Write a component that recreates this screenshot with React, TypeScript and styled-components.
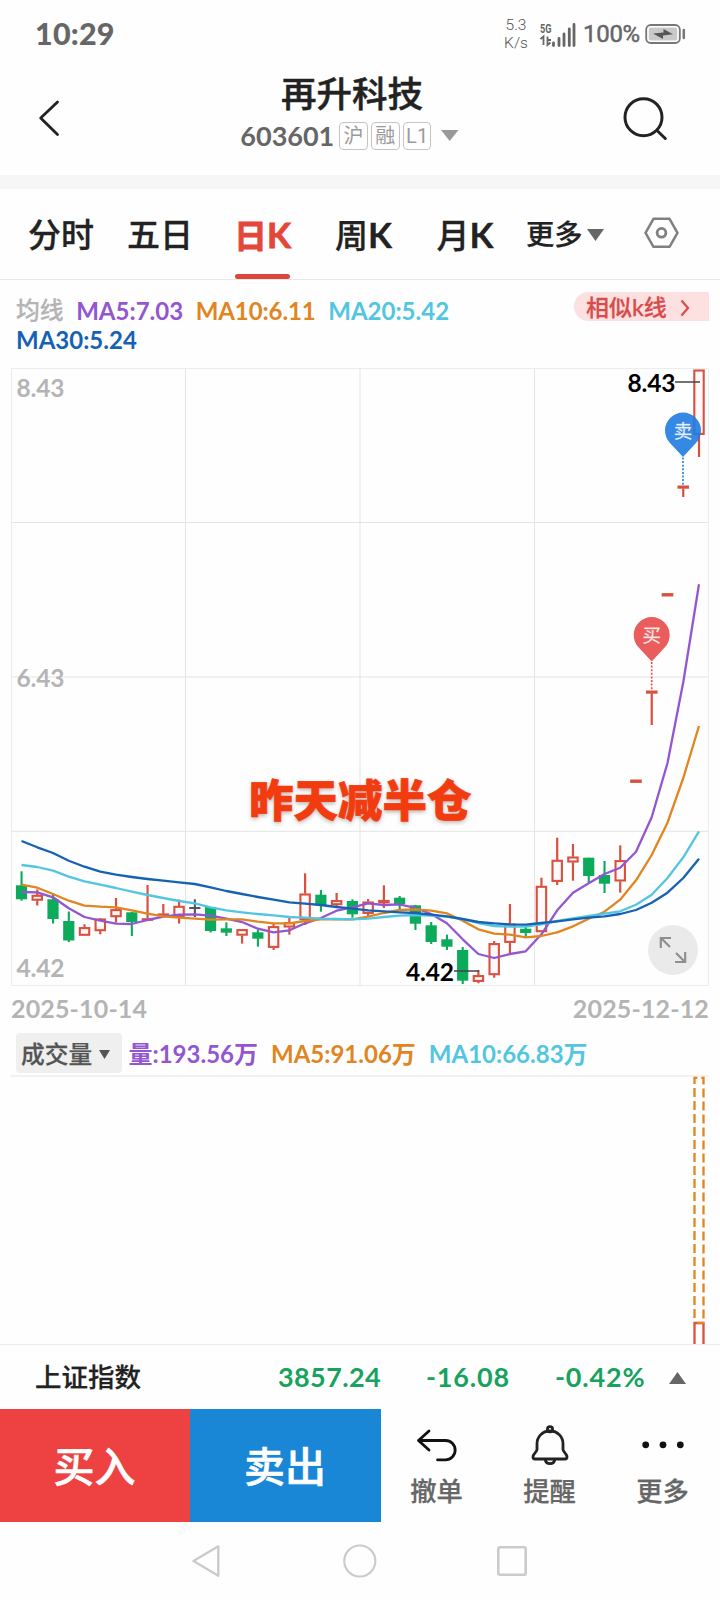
import React from "react";
import styled, { createGlobalStyle } from "styled-components";

const C = {
  ink: "#222222",
  mid: "#666666",
  faint: "#b4b4b4",
  red: "#e5463a",
  candleRed: "#d9503f",
  green: "#0bab5b",
  purple: "#9356d0",
  orange: "#e0851f",
  cyan: "#52c6e0",
  blue: "#1562b4",
  grid: "#e4e4e4",
};

const GlobalStyle = createGlobalStyle`
  * { box-sizing: border-box; }
  html, body { margin: 0; padding: 0; background: #fefefe; }
  body { font-family: "Lato", "Noto Sans CJK SC", sans-serif; color: ${C.ink}; }
  svg { display: block; flex: none; }
`;

const Screen = styled.div`
  width: 720px;
  height: 1600px;
  display: flex;
  flex-direction: column;
  overflow: hidden;
  background: #fefefe;
`;

const Text = styled.span<{ $size: number; $color?: string; $weight?: number; $ls?: number }>`
  font-size: ${(p) => p.$size}px;
  line-height: 1.2;
  font-weight: ${(p) => p.$weight ?? 700};
  color: ${(p) => p.$color ?? C.ink};
  letter-spacing: ${(p) => p.$ls ?? 0}px;
  white-space: nowrap;
  -webkit-text-stroke: ${(p) => (p.$weight === 500 ? 0.25 : 0)}px currentColor;
`;

/* Status bar */
const StatusBar = styled.div`
  height: 68px;
  display: flex;
  align-items: center;
  padding: 0 34px 0 35px;
`;
const Clock = styled(Text)`
  padding-bottom: 1px;
`;
const StatusIcons = styled.div`
  margin-left: auto;
  display: flex;
  align-items: center;
`;
const NetSpeed = styled.div`
  width: 32px;
  margin-right: 8px;
  text-align: center;
  font: 300 15.5px/18px Roboto, sans-serif;
  color: #555;
`;
const BatteryText = styled.span`
  width: 69px;
  padding-left: 7px;
  font: 400 24px/1.2 Roboto, sans-serif;
  letter-spacing: -0.3px;
  color: ${C.mid};
  -webkit-text-stroke: 0.5px ${C.mid};
`;

/* Title bar */
const Header = styled.div`
  height: 107px;
  display: grid;
  grid-template-columns: 102px 1fr 118px;
`;
const HeaderSide = styled.div<{ $end?: boolean }>`
  display: flex;
  justify-content: ${(p) => (p.$end ? "flex-end" : "flex-start")};
  padding: ${(p) => (p.$end ? "27px 52.5px 0 0" : "31px 0 0 37px")};
`;
const HeaderTitle = styled.div`
  display: flex;
  flex-direction: column;
  align-items: center;
`;
const Name = styled.h1`
  margin: 5px 0 0;
  font-size: 35.5px;
  line-height: 42px;
  font-weight: 500;
  -webkit-text-stroke: 0.5px ${C.ink};
`;
const CodeLine = styled.div`
  height: 34px;
  display: flex;
  align-items: center;
  margin-top: 4px;
  margin-left: -5px;
`;
const Code = styled(Text)`
  margin-right: 5px;
`;
const Tag = styled.span`
  width: 28.5px;
  height: 28.5px;
  margin-right: 3.3px;
  border: 1.5px solid #c4c4c4;
  border-radius: 4px;
  color: #9b9b9b;
  font: 400 20px/27px Roboto, "Noto Sans CJK SC", sans-serif;
  text-align: center;
`;
const Band = styled.div`
  height: 14px;
  background: #f6f6f6;
`;

/* Period tabs */
const Tabs = styled.div`
  height: 91px;
  display: flex;
  padding-left: 11px;
  border-bottom: 1px solid #e8e8e8;
`;
const Tab = styled.div<{ $w: number; $active?: boolean }>`
  width: ${(p) => p.$w}px;
  display: flex;
  flex-direction: column;
  align-items: center;
  justify-content: space-between;
  padding-top: 24px;
  font-size: 33px;
  line-height: 42px;
  font-weight: ${(p) => (p.$active ? 700 : 500)};
  color: ${(p) => (p.$active ? C.red : C.ink)};
  -webkit-text-stroke: ${(p) => (p.$active ? 0.8 : 0.3)}px currentColor;
`;
const TabK = styled.span`
  font-size: 35px;
  font-weight: 700;
`;
const Underline = styled.i`
  width: 55px;
  height: 5px;
  border-radius: 3px;
  background: #dc4639;
`;
const MoreTab = styled.div`
  width: 122px;
  height: 91px;
  display: flex;
  align-items: center;
  gap: 4px;
  padding-left: 7px;
`;

/* Moving-average legend */
const Legend = styled.div`
  height: 88px;
  display: flex;
  justify-content: space-between;
  align-items: flex-start;
  padding: 12px 11px 0 16px;
`;
const LegendLines = styled.div`
  display: flex;
  flex-wrap: wrap;
  column-gap: 12.6px;
  width: 460px;
  padding-top: 4px;
  & > span { line-height: 29px; }
`;
const Similar = styled.div`
  width: 135px;
  height: 29px;
  display: flex;
  align-items: center;
  gap: 13px;
  padding: 2px 0 0 12px;
  border-radius: 15px 0 0 15px;
  background: #fde0e0;
`;

/* Price chart */
const ChartArea = styled.div`
  position: relative;
  height: 620px;
`;
const Caption = styled.div`
  position: absolute;
  left: 249px;
  top: 402px;
  font-size: 44.5px;
  line-height: 60px;
  font-weight: 900;
  color: #f23c10;
  white-space: nowrap;
  -webkit-text-stroke: 0.7px #f23c10;
  text-shadow: 0 2px 4px rgba(90, 60, 50, 0.4);
`;
const Expand = styled.div`
  position: absolute;
  left: 648px;
  top: 557px;
  width: 50px;
  height: 50px;
  border-radius: 50%;
  background: rgba(230, 230, 230, 0.85);
  display: grid;
  place-items: center;
`;
const Dates = styled.div`
  height: 43px;
  display: flex;
  justify-content: space-between;
  padding: 5px 11px 0 11px;
`;

/* Volume */
const VolumeHead = styled.div`
  height: 44px;
  display: flex;
  align-items: flex-start;
  padding: 2px 0 0 15.5px;
`;
const VolumePick = styled.div`
  width: 106px;
  height: 40px;
  display: flex;
  align-items: center;
  gap: 7px;
  padding: 2px 0 0 5.5px;
  border-radius: 4px;
  background: #efefef;
`;
const VolumeValues = styled.div`
  height: 40px;
  display: flex;
  align-items: center;
  gap: 13px;
  margin-left: 7px;
  padding-top: 2px;
`;

/* Index line */
const IndexRow = styled.div`
  height: 65px;
  display: grid;
  grid-template-columns: 243px 148px 129px 114px 1fr;
  align-items: center;
  padding: 1px 0 0 35px;
  border-top: 1px solid #ececec;
`;

/* Trading bar */
const Actions = styled.div`
  height: 112.5px;
  display: flex;
`;
const Trade = styled.div<{ $bg: string; $w: number }>`
  width: ${(p) => p.$w}px;
  padding: 0 1px 3px 0;
  background: ${(p) => p.$bg};
  color: #fff;
  display: grid;
  place-items: center;
  font-size: 41px;
  font-weight: 500;
  -webkit-text-stroke: 0.6px #fff;
`;
const Tools = styled.div`
  flex: 1;
  display: grid;
  grid-template-columns: repeat(3, 113px);
  margin-left: -1px;
`;
const Tool = styled.div`
  display: flex;
  flex-direction: column;
  align-items: center;
  padding-top: 12px;
  gap: 7px;
`;

const NavBar = styled.div`
  flex: 1;
  display: flex;
  align-items: center;
  justify-content: space-between;
  padding: 0 192px 0 191px;
`;

function Caret({ w, h, color, up }: { w: number; h: number; color: string; up?: boolean }) {
  return (
    <svg width={w} height={h} viewBox="0 0 10 10" preserveAspectRatio="none">
      <path d={up ? "M0 10H10L5 0Z" : "M0 0H10L5 10Z"} fill={color} />
    </svg>
  );
}

const X0 = 21.5;
const STEP = 15.756;
const TOP = 368;
const px = (i: number) => X0 + STEP * i;

type Kind = "g" | "r" | "d";
// kind, wick top, body top, body bottom, wick bottom
const candles: [Kind, number, number, number, number][] = [
  ["g", 871.3, 885.3, 899.3, 900.7],
  ["r", 889.5, 895, 900.5, 905.5],
  ["g", 894, 899.3, 919, 923.5],
  ["g", 911.5, 921, 940.5, 942],
  ["r", 924.3, 927.3, 935.6, 935.6],
  ["r", 918, 918.7, 931, 934.3],
  ["r", 898, 909.3, 917, 922.6],
  ["g", 912, 912.3, 922, 936],
  ["r", 885, 918.5, 920.5, 920.5],
  ["r", 904, 913.7, 915.7, 916.5],
  ["r", 899.5, 906, 916.7, 923.6],
  ["d", 899.3, 907, 909, 917],
  ["g", 907, 907, 931, 932.5],
  ["g", 922.3, 928.3, 932.7, 936],
  ["r", 929, 929.3, 935.5, 943.6],
  ["g", 929.5, 932.3, 938.7, 946.6],
  ["r", 923.3, 926.3, 947.7, 950],
  ["r", 918, 922.3, 927.3, 934.7],
  ["r", 873.3, 893.7, 920, 925],
  ["g", 890, 894.7, 905.3, 911.7],
  ["r", 893, 900.3, 905, 906.7],
  ["g", 899.3, 901, 914.3, 917.7],
  ["r", 899, 901.7, 913.7, 916.7],
  ["r", 885.3, 900.2, 903, 908],
  ["g", 896, 897.7, 904, 910.7],
  ["g", 905, 905.3, 923.7, 930],
  ["g", 922, 925.3, 942, 944],
  ["g", 934.7, 939.3, 946.7, 950],
  ["g", 947, 950, 980.7, 984],
  ["r", 970, 975.3, 981.7, 983.3],
  ["r", 941, 943.3, 975, 977.7],
  ["r", 904, 923.7, 942.7, 954],
  ["g", 926.7, 928.7, 933, 936.7],
  ["r", 877.7, 886, 932, 932],
  ["r", 837.7, 860, 881.7, 885],
  ["r", 844, 856.7, 862.3, 880.7],
  ["g", 857.7, 857.7, 876, 882.7],
  ["g", 861, 875, 883.7, 893],
  ["r", 845.3, 860.3, 881.3, 892.7],
  ["r", 779.8, 779.8, 782.6, 782.6],
  ["r", 690.8, 690.8, 693.4, 725],
  ["r", 593.4, 593.4, 596.2, 596.2],
  ["r", 485.8, 485.8, 488.4, 497],
  ["r", 369.7, 369.7, 434.7, 457],
];

const ma30 = [841, 847.3, 853, 860.7, 866.7, 871.7, 874.7, 877, 879, 880.7, 882.3, 884, 887.3, 891, 894, 897, 899.7, 902.3, 903.7, 905, 907, 908.7, 910.3, 911.3, 912.3, 913, 914.7, 916.3, 919, 922, 923.3, 924.3, 924.7, 923, 921.3, 919.3, 917.7, 916.3, 914, 910, 902.7, 892.7, 878, 858.7];
const ma20 = [865, 867, 870.7, 876.7, 881.3, 884.7, 888, 891.7, 895, 898, 901, 903.3, 907.3, 910.3, 912.3, 914, 915.3, 917, 917.7, 918.7, 919, 919.3, 918.7, 917, 915.7, 915, 915.7, 916.7, 919.3, 923, 926, 926.7, 926.7, 924.3, 921, 918.3, 916, 913.7, 911.3, 904.7, 894.7, 878, 857.3, 831.3];
const ma10 = [884.7, 887.7, 894, 900.7, 905.7, 906.7, 907.3, 910.3, 913.7, 916.3, 917.7, 918.7, 919.7, 919.3, 919.3, 921.7, 923.3, 923.3, 921, 919.3, 919.3, 919.3, 916.7, 913, 910, 909.3, 910.7, 913.3, 920.7, 929.3, 933.7, 934.7, 937.3, 936, 932.3, 926.3, 918.7, 911.7, 899.7, 880.3, 855, 822.7, 778, 726];
const ma5 = [892, 892.3, 897.3, 908.3, 917, 920.7, 923.7, 924, 920, 916.7, 914.7, 914.3, 915.7, 918.7, 922, 928.7, 932.3, 930.3, 923.3, 918, 910.7, 907.3, 903.3, 905, 904.3, 908, 914, 923.3, 939.3, 954, 958, 954, 951.3, 934.3, 910.3, 892.7, 883.3, 874, 867.7, 851.7, 817.3, 763, 682, 584.3];

const line = (ys: number[]) => ys.map((y, i) => `${px(i).toFixed(1)},${(y - TOP).toFixed(1)}`).join(" ");

function Candle({ i }: { i: number }) {
  const [kind, hi, top, bottom, lo] = candles[i];
  const x = px(i);
  if (kind === "g" || kind === "d") {
    const fill = kind === "g" ? C.green : "#555";
    return (
      <g fill={fill}>
        <rect x={x - 1} y={hi - TOP} width={2.1} height={lo - hi} />
        <rect x={x - 5.6} y={top - TOP} width={11.2} height={bottom - top} />
      </g>
    );
  }
  const thin = bottom - top < 3;
  return (
    <g>
      <rect x={x - 1.1} y={hi - TOP} width={2.2} height={top - hi} fill={C.candleRed} />
      <rect x={x - 1.1} y={bottom - TOP} width={2.2} height={lo - bottom} fill={C.candleRed} />
      {thin ? (
        <rect x={x - 5.8} y={top - TOP - 0.3} width={11.6} height={bottom - top + 0.6} fill={C.candleRed} />
      ) : (
        <rect x={x - 4.7} y={top - TOP + 0.8} width={9.4} height={bottom - top - 1.6} fill="#fffafa" stroke={C.candleRed} strokeWidth={2.1} />
      )}
    </g>
  );
}

function Pin({ x, y, end, color, label }: { x: number; y: number; end: number; color: string; label: string }) {
  return (
    <g transform={`translate(${x} ${y - TOP})`}>
      <path d={`M0 27V${end - y}`} stroke={color} strokeWidth={1.6} strokeDasharray="2 1.6" />
      <path d="M0 26.5L-13.2 12.3A18 18 0 1 1 13.2 12.3Z" fill={color} fillOpacity={0.9} />
      <text y={7} fontSize={18.5} fill="#fff" fillOpacity={0.85} stroke="#fff" strokeOpacity={0.5} strokeWidth={0.4} textAnchor="middle">{label}</text>
    </g>
  );
}

function PriceChart() {
  return (
    <svg width={720} height={620} viewBox="0 0 720 620">
      <g stroke={C.grid} fill="none">
        <path d="M11.5 .5H708.5V617.5H11.5Z" stroke="#ececec" />
        <path d="M185.5 .5V617.5M360 .5V617.5M534.5 .5V617.5" />
        <path d="M11.5 154.5H708M11.5 309H708M11.5 463.3H708" />
      </g>
      <g fontSize={24.5} fontWeight={700} fill={C.faint} letterSpacing={-0.2}>
        <text x={16.5} y={29}>8.43</text>
        <text x={16.5} y={319}>6.43</text>
        <text x={16.5} y={609}>4.42</text>
      </g>
      {candles.map((_, i) => (
        <Candle key={i} i={i} />
      ))}
      <g fill="none" strokeWidth={2.3} strokeLinejoin="round">
        <polyline points={line(ma5)} stroke={C.purple} />
        <polyline points={line(ma10)} stroke={C.orange} />
        <polyline points={line(ma20)} stroke={C.cyan} />
        <polyline points={line(ma30)} stroke={C.blue} />
      </g>
      <path d="M675 14H700M454 603H479" stroke="#444" strokeWidth={1.3} />
      <g fontSize={24.5} fontWeight={700} fill="#000" letterSpacing={-0.2}>
        <text x={627.5} y={23.7}>8.43</text>
        <text x={406} y={613}>4.42</text>
      </g>
      <Pin x={683} y={430.5} end={485} color="#1f7be0" label="卖" />
      <Pin x={651.7} y={635} end={690} color="#e94b4b" label="买" />
    </svg>
  );
}

export default function App() {
  return (
    <>
      <GlobalStyle />
      <Screen>
        <StatusBar>
          <Clock $size={30.5} $color={C.mid} $weight={900} $ls={0.2}>10:29</Clock>
          <StatusIcons>
            <NetSpeed>5.3<br />K/s</NetSpeed>
            <svg width={36} height={26} viewBox="0 0 36 26">
              <text x={0} y={12} fontFamily="Roboto" fontSize={13.5} fontWeight={700} fill={C.mid} textLength={11.5} lengthAdjust="spacingAndGlyphs">5G</text>
              <path d="M.5 18L3.5 15.5V24M7.5 15.5V24L10.5 21.5M8 19H11" stroke={C.mid} strokeWidth={1.8} fill="none" />
              <path d="M13.5 22V24.5M19 17.5V24.5M24 13V24.5M29.3 8V24.5M34 3.5V24.5" stroke={C.mid} strokeWidth={2.8} strokeLinecap="round" />
            </svg>
            <BatteryText>100%</BatteryText>
            <svg width={41} height={22} viewBox="0 0 41 22">
              <rect x={1.2} y={2} width={33.6} height={18} rx={4.5} fill="none" stroke="#777" strokeWidth={1.8} />
              <rect x={3.8} y={4.6} width={28.4} height={12.8} rx={2} fill="#c9c9c9" />
              <path d="M8 10.5L18.5 9.5V6L28 11.3L18 12.5V16Z" fill="#555" />
              <path d="M38.8 7V15" stroke="#777" strokeWidth={2.5} strokeLinecap="round" />
            </svg>
          </StatusIcons>
        </StatusBar>

        <Header>
          <HeaderSide>
            <svg width={24} height={38} viewBox="0 0 24 38" fill="none" stroke={C.ink} strokeWidth={2.8} strokeLinecap="round" strokeLinejoin="round">
              <path d="M20.5 3L3.7 19L20.5 35.5" />
            </svg>
          </HeaderSide>
          <HeaderTitle>
            <Name>再升科技</Name>
            <CodeLine>
              <Code $size={27} $color={C.mid}>603601</Code>
              <Tag>沪</Tag>
              <Tag>融</Tag>
              <Tag>L1</Tag>
              <svg width={24} height={12} viewBox="0 0 24 12">
                <path d="M6 0H23.5L14.7 11Z" fill="#999" />
              </svg>
            </CodeLine>
          </HeaderTitle>
          <HeaderSide $end>
            <svg width={46} height={48} viewBox="0 0 46 48" fill="none" stroke={C.ink} strokeWidth={3} strokeLinecap="round">
              <circle cx={21.5} cy={22.2} r={18.5} />
              <path d="M35 35.5L43.3 43.5" />
            </svg>
          </HeaderSide>
        </Header>
        <Band />

        <Tabs>
          <Tab $w={100}>分时</Tab>
          <Tab $w={98}>五日</Tab>
          <Tab $w={107} $active><span>日<TabK>K</TabK></span><Underline /></Tab>
          <Tab $w={95}><span>周<TabK>K</TabK></span></Tab>
          <Tab $w={108}><span>月<TabK>K</TabK></span></Tab>
          <MoreTab>
            <Text $size={28.3} $weight={500}>更多</Text>
            <Caret w={17} h={12} color="#666" />
          </MoreTab>
          <svg width={40} height={86} viewBox="0 0 40 86" fill="none" stroke="#808080" strokeWidth={2.5} strokeLinejoin="round">
            <path d="M12.5 29.8H28.5L36.5 43.8L28.5 57.8H12.5L4.5 43.8Z" />
            <circle cx={20.5} cy={43.8} r={4.4} strokeWidth={2.8} />
          </svg>
        </Tabs>

        <Legend>
          <LegendLines>
            <Text $size={23.8} $color={C.faint} $weight={500}>均线</Text>
            <Text $size={24} $color={C.purple}>MA5:7.03</Text>
            <Text $size={24} $color={C.orange} $ls={-0.1}>MA10:6.11</Text>
            <Text $size={24} $color={C.cyan}>MA20:5.42</Text>
            <Text $size={24} $color={C.blue}>MA30:5.24</Text>
          </LegendLines>
          <Similar>
            <Text $size={23} $color="#d94a4a" $weight={500}>相似k线</Text>
            <svg width={10} height={18} viewBox="0 0 10 18" fill="none" stroke="#d94a4a" strokeWidth={2.2}>
              <path d="M1.5 1.5L8 9L1.5 16.5" />
            </svg>
          </Similar>
        </Legend>

        <ChartArea>
          <PriceChart />
          <Caption>昨天减半仓</Caption>
          <Expand>
            <svg width={28} height={28} viewBox="0 0 28 28" fill="none" stroke="#8f8f8f" strokeWidth={2.2}>
              <path d="M1.8 12V2H12M2 2L11 11M26.2 16V26H16M26 26L17 17" />
            </svg>
          </Expand>
        </ChartArea>
        <Dates>
          <Text $size={25} $color={C.faint} $ls={0.15}>2025-10-14</Text>
          <Text $size={25} $color={C.faint} $ls={0.15}>2025-12-12</Text>
        </Dates>

        <VolumeHead>
          <VolumePick>
            <Text $size={23.7} $color="#555" $weight={500}>成交量</Text>
            <Caret w={11} h={9} color="#555" />
          </VolumePick>
          <VolumeValues>
            <Text $size={24} $color={C.purple}>量:193.56万</Text>
            <Text $size={24} $color={C.orange}>MA5:91.06万</Text>
            <Text $size={24} $color={C.cyan}>MA10:66.83万</Text>
          </VolumeValues>
        </VolumeHead>
        <svg width={720} height={269} viewBox="0 0 720 269" fill="none">
          <path d="M10 1H708" stroke="#ececec" strokeWidth={1.5} />
          <path d="M694.5 269V2.8H703.5V269" stroke={C.orange} strokeWidth={2.3} strokeDasharray="9 4" />
          <rect x={692} y={246} width={14} height={23} fill="#fefefe" />
          <path d="M694.5 269V248H703.5V269" stroke={C.candleRed} strokeWidth={2.3} />
          <path d="M697 248H704" stroke={C.orange} strokeWidth={2.3} />
        </svg>

        <IndexRow>
          <Text $size={26.5} $weight={500}>上证指数</Text>
          <Text $size={27} $color="#17a260" $ls={0.4}>3857.24</Text>
          <Text $size={27} $color="#17a260" $ls={0.8}>-16.08</Text>
          <Text $size={27} $color="#17a260" $ls={0.8}>-0.42%</Text>
          <Caret w={17} h={12} color="#666" up />
        </IndexRow>

        <Actions>
          <Trade $bg="#ee4242" $w={190}>买入</Trade>
          <Trade $bg="#1a86d6" $w={191}>卖出</Trade>
          <Tools>
            <Tool>
              <svg width={44} height={48} viewBox="0 0 44 48" fill="none" stroke="#111" strokeWidth={2.8} strokeLinecap="round" strokeLinejoin="round">
                <path d="M14 10L3.5 19.5L14 29M3.5 19.5H30.5A9.6 9.6 0 0 1 30.5 38.8H22.5" />
              </svg>
              <Text $size={26.3} $color={C.mid} $weight={500}>撤单</Text>
            </Tool>
            <Tool>
              <svg width={44} height={48} viewBox="0 0 44 48" fill="none" stroke="#222" strokeWidth={2.8} strokeLinecap="round" strokeLinejoin="round">
                <circle cx={22} cy={8.3} r={2.6} />
                <path d="M22 10C14 10 9 16 9 23V28.5C9 31 5 32.5 5 36C5 37.2 5.8 38 7 38H37C38.2 38 39 37.2 39 36C39 32.5 35 31 35 28.5V23C35 16 30 10 22 10Z" />
                <path d="M17.3 38.5C17.8 44 26.2 44 26.7 38.5" />
              </svg>
              <Text $size={26.3} $color={C.mid} $weight={500}>提醒</Text>
            </Tool>
            <Tool>
              <svg width={44} height={48} viewBox="0 0 44 48" fill="#111">
                <circle cx={4.7} cy={23.8} r={3.4} />
                <circle cx={22} cy={23.8} r={3.4} />
                <circle cx={39.3} cy={23.8} r={3.4} />
              </svg>
              <Text $size={26.3} $color={C.mid} $weight={500}>更多</Text>
            </Tool>
          </Tools>
        </Actions>

        <NavBar>
          <svg width={30} height={36} viewBox="0 0 30 36" fill="none" stroke="#cbcbcd" strokeWidth={2.4} strokeLinejoin="round">
            <path d="M2.5 18L27.3 3.3V32.7Z" />
          </svg>
          <svg width={36} height={36} viewBox="0 0 36 36" fill="none" stroke="#cbcbcd" strokeWidth={2.2}>
            <circle cx={18.8} cy={18} r={15.5} />
          </svg>
          <svg width={32} height={32} viewBox="0 0 32 32" fill="none" stroke="#cbcbcd" strokeWidth={2.6}>
            <rect x={2.3} y={2.3} width={27.4} height={27.4} rx={1.5} />
          </svg>
        </NavBar>
      </Screen>
    </>
  );
}
